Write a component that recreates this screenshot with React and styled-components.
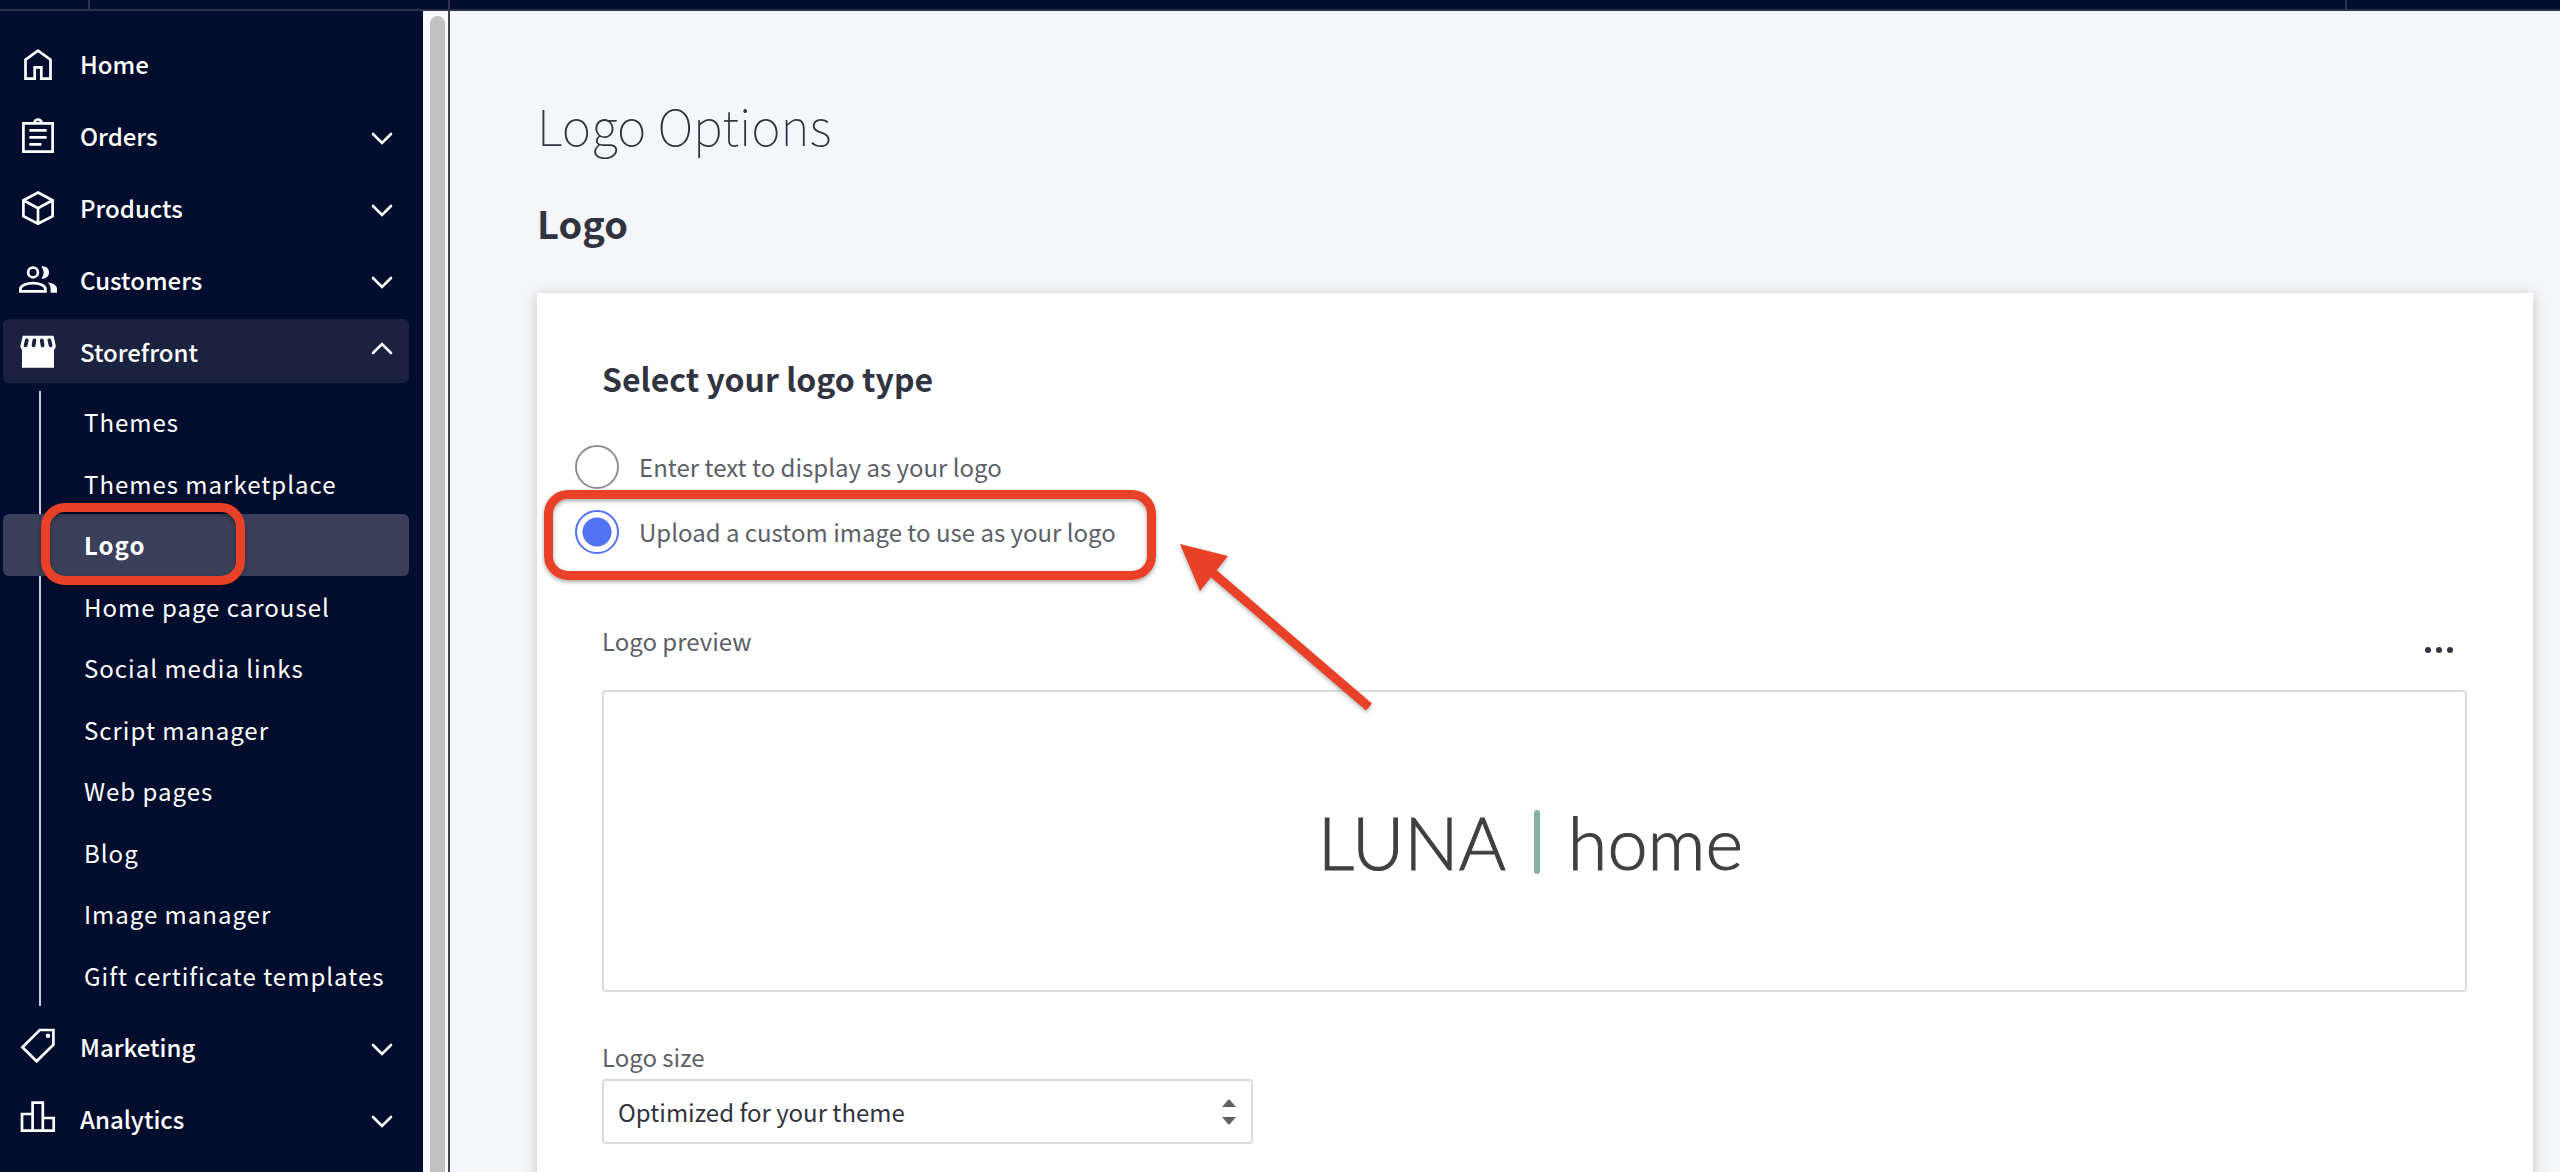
import React from 'react'
import styled, { createGlobalStyle } from 'styled-components'

const GlobalStyle = createGlobalStyle`
    * {
        box-sizing: border-box;
    }
    body {
        margin: 0;
        background: #f5f6f9;
        font-family: "Noto Sans CJK SC", "Open Sans", sans-serif;
        color: #313440;
    }
    h1, h2, h3, ul, fieldset, legend {
        margin: 0;
        padding: 0;
        border: 0;
        list-style: none;
    }
`;

const icons = {
    home: (
        <path d="M11.5 39.7H20.7V28.3H27.3V39.7H36.5V20.6L24 11.6L11.5 20.6Z" />
    ),
    orders: (
        <>
            <path d="M9.4 12.4H38.6V40.6H9.4Z" />
            <path d="M20.5 12a3.5 3.5 0 0 1 7 0" />
            <path d="M15.4 19.3H32.6M15.4 26.3H32.6M15.4 33.3H27.4" />
        </>
    ),
    products: (
        <path d="M24 9.5L38.6 17.2V33.2L24 40.8L9.4 33.2V17.2ZM9.4 17.2L24 25.2L38.6 17.2M24 25.2V40.8" />
    ),
    customers: (
        <>
            <circle cx="19" cy="17.4" r="4.9" />
            <path d="M6.4 36.3V34C6.4 30.4 13 28.2 19 28.2S31.4 30.4 31.4 34V36.3Z" />
            <path fill="currentColor" stroke="none" d="M27.3 11.4C32.5 11 35 14 35 17.5S32.5 24 27.3 23.6C30.4 20 30.4 15 27.3 11.4Z" />
            <path fill="currentColor" stroke="none" d="M33.8 27.6C39 28.2 43 30.4 43 34V37.7H36.6V34C36.6 31.4 35.6 29.2 33.8 27.6Z" />
        </>
    ),
    storefront: (
        <>
            <path fill="currentColor" stroke="none" d="M8.8 8.7H39.6L41.7 18.6C41.9 20.6 41.2 22 40 22.6V40.7H8V22.6C6.8 22 6.1 20.6 6.5 18.6Z" />
            <path stroke="#1a2240" strokeWidth="3.8" strokeLinecap="round" d="M12.8 13.4L11.6 18.4M20.4 13.4L19.6 18.4M27.8 13.4L28.6 18.4M35.4 13.4L36.6 18.4" />
        </>
    ),
    marketing: (
        <>
            <path d="M25.8 8H39.4V22.6L22.6 39.3L8.4 25.2Z" />
            <circle cx="34" cy="13.8" r="2.2" fill="currentColor" stroke="none" />
        </>
    ),
    analytics: (
        <path d="M8 20H18.6V36.7H8ZM18.6 8.6H28.8V36.7H18.6ZM28.8 24H39.7V36.7H28.8Z" />
    ),
}

const storefrontLinks = [
    'Themes',
    'Themes marketplace',
    'Logo',
    'Home page carousel',
    'Social media links',
    'Script manager',
    'Web pages',
    'Blog',
    'Image manager',
    'Gift certificate templates',
]

const NavItem = ({ icon, label, menu, open }) => (
    <NavButton type="button" $open={open}>
        <NavIcon viewBox="0 0 48 48">{icons[icon]}</NavIcon>
        <NavLabel>{label}</NavLabel>
        {menu && (
            <Chevron viewBox="0 0 24 24">
                <path d={open ? 'M3 14L12 5L21 14' : 'M3 11L12 20L21 11'} />
            </Chevron>
        )}
    </NavButton>
)

export default () => (
    <Page>
        <GlobalStyle />
        <TopBar>
            <TopCell $width="90px" />
            <TopCell $width="360px" />
            <TopCell $grow />
            <TopCell $width="213px" $last />
        </TopBar>
        <Body>
            <Sidebar>
                <NavItem icon="home" label="Home" />
                <NavItem icon="orders" label="Orders" menu />
                <NavItem icon="products" label="Products" menu />
                <NavItem icon="customers" label="Customers" menu />
                <NavItem icon="storefront" label="Storefront" menu open />
                <SubMenu>
                    {storefrontLinks.map((name) => (
                        <SubItem key={name}>
                            <SubLink href="#" $active={name === 'Logo'}>{name}</SubLink>
                            {name === 'Logo' && <SubHighlight />}
                        </SubItem>
                    ))}
                </SubMenu>
                <NavItem icon="marketing" label="Marketing" menu />
                <NavItem icon="analytics" label="Analytics" menu />
            </Sidebar>
            <ScrollTrack>
                <ScrollThumb />
            </ScrollTrack>
            <Main>
                <Title>Logo Options</Title>
                <SectionTitle>Logo</SectionTitle>
                <Card>
                    <fieldset>
                        <Legend>Select your logo type</Legend>
                        <RadioList>
                            <RadioLabel>
                                <Radio type="radio" name="logoType" />
                                Enter text to display as your logo
                            </RadioLabel>
                            <RadioLabel>
                                <Radio type="radio" name="logoType" defaultChecked />
                                Upload a custom image to use as your logo
                                <RadioHighlight />
                                <Arrow viewBox="0 0 210 180">
                                    <path d="M38 33L194 167" stroke="#e84127" strokeWidth="9" fill="none" />
                                    <path d="M5 4L53 16L25 51Z" fill="#e84127" />
                                </Arrow>
                            </RadioLabel>
                        </RadioList>
                    </fieldset>
                    <PreviewHeader>
                        <PreviewLabel>Logo preview</PreviewLabel>
                        <MoreButton type="button" aria-label="More">
                            <svg width="28" height="8" viewBox="0 0 28 8" fill="currentColor">
                                <circle cx="3" cy="4" r="3" />
                                <circle cx="14" cy="4" r="3" />
                                <circle cx="25" cy="4" r="3" />
                            </svg>
                        </MoreButton>
                    </PreviewHeader>
                    <Preview>
                        <span>LUNA</span>
                        <Divider />
                        <span>home</span>
                    </Preview>
                    <SizeLabel htmlFor="logoSize">Logo size</SizeLabel>
                    <SelectWrapper>
                        <Select id="logoSize">
                            <option>Optimized for your theme</option>
                        </Select>
                        <SelectArrows viewBox="0 0 14 26">
                            <path d="M7 0L14 8H0ZM7 26L14 18H0Z" />
                        </SelectArrows>
                    </SelectWrapper>
                </Card>
            </Main>
        </Body>
    </Page>
)

const Page = styled.div`
    display: flex;
    flex-direction: column;
    height: 100vh;
    overflow: hidden;
`;

const TopBar = styled.header`
    display: flex;
    flex: none;
    height: 11px;
    background: #030e2f;
    border-bottom: 2px solid #2b3249;
`;

const TopCell = styled.div`
    width: ${(props) => props.$width};
    flex: ${(props) => (props.$grow ? '1' : 'none')};
    border-right: ${(props) => (props.$last ? '0' : '2px solid #2b3249')};
`;

const Body = styled.div`
    display: flex;
    flex: 1;
    min-height: 0;
`;

const Sidebar = styled.nav`
    display: flex;
    flex-direction: column;
    flex: none;
    gap: 8px;
    width: 423px;
    padding: 20px 14px 0 3px;
    background: #030e2f;
    color: #ffffff;
`;

const NavButton = styled.button`
    display: flex;
    flex: none;
    align-items: center;
    height: 64px;
    padding: 0 15px 0 11px;
    border: 0;
    border-radius: 6px;
    background: ${(props) => (props.$open ? '#1a2240' : 'transparent')};
    color: inherit;
    font-family: inherit;
    font-size: 24px;
    font-weight: 500;
    text-align: left;
    cursor: pointer;
`;

const NavIcon = styled.svg`
    width: 48px;
    height: 48px;
    margin-right: 18px;
    fill: none;
    stroke: currentColor;
    stroke-width: 2.7;
`;

const NavLabel = styled.span`
    flex: 1;
    padding-top: 2px;
    line-height: 40px;
`;

const Chevron = styled.svg`
    width: 24px;
    height: 24px;
    fill: none;
    stroke: currentColor;
    stroke-width: 2.6;
    stroke-linecap: round;
`;

const SubMenu = styled.ul`
    display: grid;
    flex: none;
    grid-auto-rows: 1fr;
    height: 615px;
    background: linear-gradient(#c3cbdf, #c3cbdf) 36px 0 / 2px 100% no-repeat;
`;

const SubItem = styled.li`
    position: relative;
    display: flex;
`;

const SubLink = styled.a`
    display: flex;
    flex: 1;
    align-items: center;
    padding-left: 81px;
    border-radius: 6px;
    background: ${(props) => (props.$active ? '#3a3f5a' : 'transparent')};
    color: #ffffff;
    font-size: 24px;
    font-weight: ${(props) => (props.$active ? '700' : '400')};
    letter-spacing: 1px;
    text-decoration: none;
`;

const Highlight = styled.span`
    position: absolute;
    border: 9px solid #e84127;
    border-radius: 24px;
    box-shadow: 0 2px 4px rgba(0, 0, 0, 0.35), inset 0 2px 4px rgba(0, 0, 0, 0.35);
    pointer-events: none;
`;

const SubHighlight = styled(Highlight)`
    top: -11px;
    bottom: -9px;
    left: 38px;
    width: 204px;
`;

const ScrollTrack = styled.div`
    display: flex;
    flex: none;
    width: 27px;
    padding: 5px 3px 0 7px;
    background: #fafafa;
    border-right: 2px solid #3f434f;
`;

const ScrollThumb = styled.div`
    flex: 1;
    border-radius: 8px 8px 0 0;
    background: #c1c1c1;
`;

const Main = styled.main`
    display: flex;
    flex: 1;
    flex-direction: column;
    min-width: 0;
    padding: 83px 27px 0 87px;
`;

const Title = styled.h1`
    margin-bottom: 45px;
    font-size: 50px;
    font-weight: 100;
    line-height: 60px;
`;

const SectionTitle = styled.h2`
    margin-bottom: 46px;
    font-size: 38px;
    font-weight: 700;
    line-height: 48px;
`;

const Card = styled.section`
    flex: 1 0 auto;
    padding: 65px 66px 65px 65px;
    background: #ffffff;
    box-shadow: 0 2px 12px rgba(49, 52, 64, 0.25);
`;

const Legend = styled.legend`
    margin-bottom: 47px;
    font-size: 32px;
    font-weight: 700;
    line-height: 40px;
`;

const RadioList = styled.div`
    display: flex;
    flex-direction: column;
    align-items: flex-start;
    gap: 21px;
    margin-left: -27px;
`;

const RadioLabel = styled.label`
    position: relative;
    display: flex;
    align-items: center;
    gap: 20px;
    color: #5c5f68;
    font-size: 24px;
    line-height: 44px;
`;

const Radio = styled.input`
    appearance: none;
    width: 44px;
    height: 44px;
    margin: 0;
    border: 2px solid #8c8f98;
    border-radius: 50%;
    background: #ffffff;
    &:checked {
        border-color: #5273f4;
        background: radial-gradient(circle, #5273f4 14px, #ffffff 15px);
    }
`;

const RadioHighlight = styled(Highlight)`
    top: -20px;
    bottom: -26px;
    left: -31px;
    width: 612px;
`;

const Arrow = styled.svg`
    position: absolute;
    top: 30px;
    left: 600px;
    width: 210px;
    height: 180px;
    filter: drop-shadow(0 2px 2px rgba(0, 0, 0, 0.3));
    pointer-events: none;
`;

const PreviewHeader = styled.div`
    display: flex;
    align-items: flex-end;
    justify-content: space-between;
    margin: 71px 0 16px;
`;

const PreviewLabel = styled.span`
    padding-bottom: 17px;
    color: #5c5f68;
    font-size: 24px;
    line-height: 32px;
`;

const MoreButton = styled.button`
    display: flex;
    align-items: center;
    justify-content: center;
    width: 56px;
    height: 48px;
    padding: 0;
    border: 0;
    background: transparent;
    color: #313440;
    cursor: pointer;
`;

const Preview = styled.div`
    display: flex;
    align-items: center;
    justify-content: center;
    gap: 28px;
    height: 302px;
    padding: 2px 8px 0 0;
    border: 2px solid #d9dbdd;
    border-radius: 4px;
    color: #3f3f40;
    font-family: Lato, sans-serif;
    font-size: 72px;
    font-weight: 300;
    line-height: 80px;
    -webkit-text-stroke: 1px #3f3f40;
`;

const Divider = styled.i`
    width: 6px;
    height: 64px;
    border-radius: 3px;
    background: #86b29b;
`;

const SizeLabel = styled.label`
    display: block;
    margin: 49px 0 6px;
    color: #5c5f68;
    font-size: 24px;
    line-height: 32px;
`;

const SelectWrapper = styled.div`
    position: relative;
    width: 651px;
`;

const Select = styled.select`
    appearance: none;
    width: 100%;
    height: 65px;
    padding: 0 56px 0 14px;
    border: 2px solid #d9dbdd;
    border-radius: 4px;
    background: #ffffff;
    color: #313440;
    font-family: inherit;
    font-size: 24px;
`;

const SelectArrows = styled.svg`
    position: absolute;
    top: 20px;
    right: 17px;
    width: 14px;
    height: 26px;
    fill: #5e626d;
    pointer-events: none;
`;
